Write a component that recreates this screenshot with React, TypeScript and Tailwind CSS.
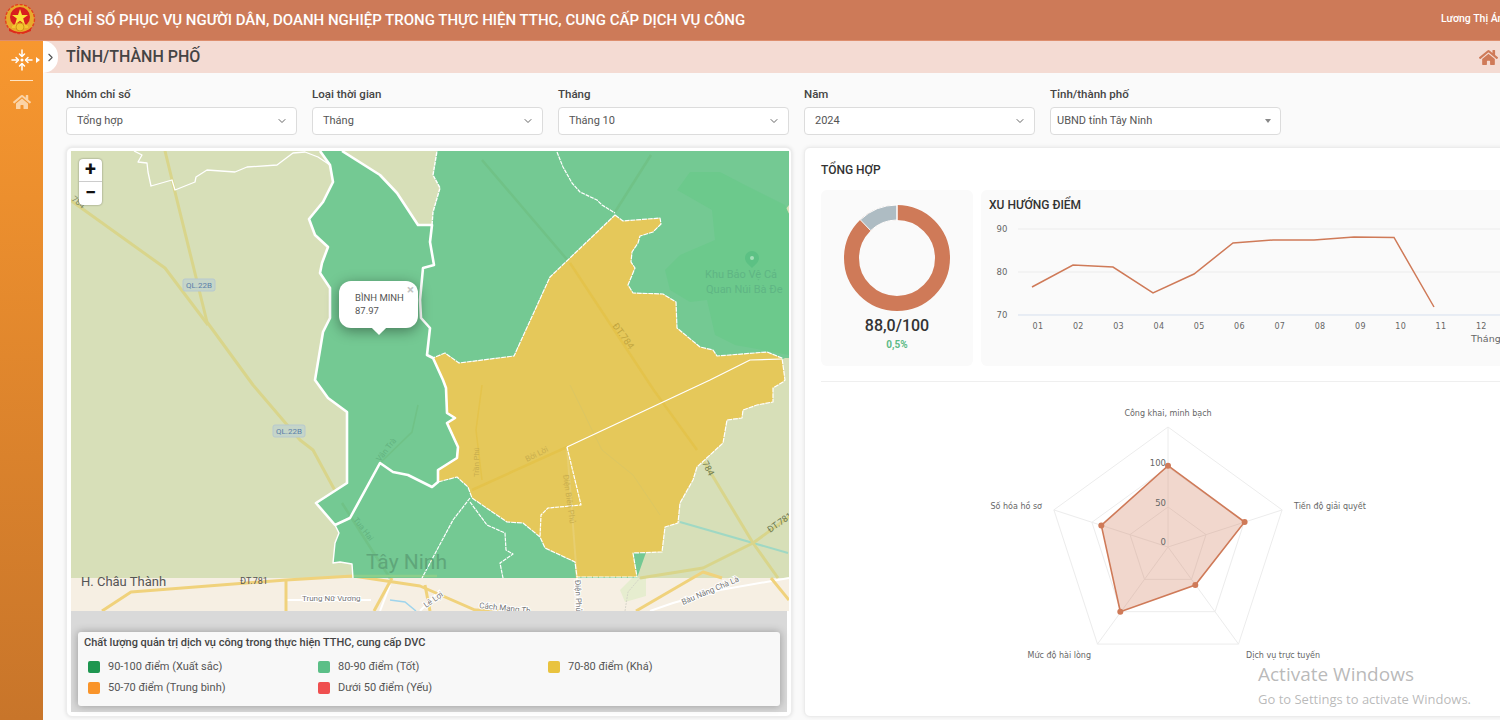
import React from "react";
import { ChevronDown, ChevronRight } from "lucide-react";
import { FaHome } from "react-icons/fa";

const ORANGE = "#cf7a58";

function Emblem() {
  return (
    <svg width="32" height="32" viewBox="0 0 32 32" className="shrink-0">
      <circle cx="16" cy="15" r="14.5" fill="#e9a92c" />
      <circle cx="16" cy="15" r="14.5" fill="none" stroke="#e2401f" strokeWidth="1.4" strokeDasharray="3 1.5" />
      <circle cx="16" cy="13" r="10" fill="#d81e1e" />
      <polygon points="16,5 18,11 24,11 19.2,14.6 21,20.4 16,16.8 11,20.4 12.8,14.6 8,11 14,11" fill="#fbe23a" />
      <path d="M8 22 Q16 15 24 22 L24 24 L8 24 Z" fill="#f4c430" />
      <circle cx="16" cy="23" r="4" fill="#f4c430" stroke="#c98a12" strokeWidth="0.8" />
      <path d="M5 24 Q16 32 27 24 L27 27 Q16 32 5 27 Z" fill="#de2b1c" />
    </svg>
  );
}

function MoveInIcon() {
  return (
    <svg width="22" height="22" viewBox="0 0 22 22" fill="none" stroke="#fff" strokeWidth="1.5" strokeLinecap="round" strokeLinejoin="round">
      <path d="M11 1v6M11 15v6M1 11h6M15 11h6" />
      <path d="M8.5 5 11 7.5 13.5 5M8.5 17 11 14.5 13.5 17M5 8.5 7.5 11 5 13.5M17 8.5 14.5 11 17 13.5" />
      <circle cx="11" cy="11" r="0.8" fill="#fff" />
    </svg>
  );
}

function Field({ label, value, caret, wide }: { label: string; value: string; caret?: boolean; wide?: boolean }) {
  return (
    <div className="w-[231px] shrink-0">
      <div className="mb-[5px] h-4 text-[11.5px] font-medium leading-4 text-[#444]">{label}</div>
      <div className={`flex h-[28px] items-center justify-between rounded border border-[#dcdcdc] bg-white pr-2 text-[11px] text-[#555] ${wide ? "pl-[6px]" : "pl-[10px]"}`}>
        <span>{value}</span>
        {caret ? (
          <span className="mr-[1px] h-0 w-0 border-x-[3px] border-t-[4px] border-x-transparent border-t-[#888]" />
        ) : (
          <ChevronDown size={12} color="#666" />
        )}
      </div>
    </div>
  );
}

const GREEN = "320,151 330,165 333,182 323,202 309,219 315,235 328,247 322,263 320,273 330,288 330,318 323,332 317,368 315,380 328,398 347,412 347,483 316,503 335,525 339,533 335,543 333,563 340,562 352,564 353,578 637,578 700,400 785,358 789,358 789,214 785,210 789,205 789,151 437,151 433,175 440,188 433,212 432,225 418,225 397,193 380,175 342,151";
const YELLOW = "615,215 623,221 660,218 661,224 653,232 640,236 638,243 632,252 631,262 635,268 628,285 633,293 663,294 676,302 677,328 700,347 713,350 717,356 767,352 782,358 785,380 783,382 773,388 773,402 757,405 743,410 742,418 727,420 723,443 697,467 693,480 680,503 678,523 665,527 662,552 633,553 637,577 577,577 575,562 545,548 540,537 523,523 507,522 472,498 468,487 457,477 438,482 438,470 457,458 458,447 447,423 455,418 447,413 446,388 443,380 433,358 445,353 459,363 514,356 550,277";

function MapDrawing() {
  const label = { fontFamily: "Roboto, sans-serif" };
  return (
    <svg width="718" height="460" viewBox="71 151 718 460" className="block" style={label}>
      <rect x="71" y="151" width="718" height="460" fill="#f6efe3" />
      <rect x="71" y="151" width="718" height="427" fill="#d7dfb8" />
      <polygon points="620,590 632,578 646,578 646,596 625,602" fill="#e6edcf" />

      {/* roads on the plain */}
      <g fill="none" stroke="#d9d58b" strokeWidth="3" strokeLinejoin="round">
        <polyline points="165,151 175,192 207,322 253,385 300,440 313,450 333,487 342,503" />
        <polyline points="70,200 165,268 208,325" />
        <polyline points="680,522 788,553" stroke="#9fd8c4" strokeWidth="2" />
        <polyline points="697,450 753,543 778,578" />
        <polyline points="640,578 703,568 753,543 789,517" />
      </g>
      {/* roads below the overlay */}
      <g fill="none" stroke="#fff" strokeWidth="2">
        <polyline points="286,600 371,600" />
        <polyline points="390,585 380,611" />
        <polyline points="650,611 673,603 720,590 789,578" />
        <polyline points="577,578 578,611" />
        <polyline points="440,590 420,611" />
      </g>
      <g fill="none" stroke="#f0d27c" strokeWidth="3" strokeLinejoin="round">
        <polyline points="102,611 131,592 286,580 353,576 420,586 475,610 520,611" />
        <polyline points="286,580 286,611" />
        <polyline points="392,578 374,611" />
        <polyline points="425,585 430,611" />
        <polyline points="636,611 703,572 722,578" />
        <polyline points="771,578 789,600" />
      </g>
      <polyline points="390,600 405,602 416,611" fill="none" stroke="#9fd4ec" strokeWidth="1.5" />
      <polyline points="625,611 628,592 640,578" fill="none" stroke="#cfcfc4" strokeWidth="0.8" strokeDasharray="2 1" />

      <polygon points={GREEN} fill="#74c993" />
      <polygon points="677,190 690,172 720,172 745,185 785,205 789,214 789,355 735,345 715,335 707,300 690,302 670,290 665,270 680,255 715,240 712,210" fill="#6cc98c" />
      {/* faint roads under the green tint */}
      <g fill="none" stroke="#70c287" strokeWidth="2.5">
        <polyline points="482,160 570,263" />
        <polyline points="651,155 615,212" />
        <polyline points="380,463 412,432 418,405" strokeWidth="1.5" />
        <polyline points="342,503 375,555 390,578" />
        <polyline points="353,576 437,576" stroke="#8ccf8b" />
      </g>
      <polygon points={YELLOW} fill="#e5c85a" />
      <g fill="none" stroke="#e4c34b" strokeWidth="2.5">
        <polyline points="570,263 653,389 697,450" />
        <polyline points="472,490 567,447" />
        <polyline points="482,385 476,430 482,480" strokeWidth="1.5" />
        <polyline points="567,447 577,578" stroke="#e7ce70" strokeWidth="2" />
      </g>
      <polyline points="570,385 602,450 633,475 660,515" fill="none" stroke="#dcc662" strokeWidth="1" />

      {/* boundaries */}
      <g fill="none" stroke="#fff" strokeLinejoin="round">
        <polygon points={YELLOW} strokeWidth="1.2" strokeDasharray="5 0.8" />
        <polyline strokeWidth="2.6" points="320,151 330,165 333,182 323,202 309,219 315,235 328,247 322,263 320,273 330,288 330,318 323,332 317,368 315,380 328,398 347,412 347,483 316,503 335,525 350,518 380,463 393,472 408,475 432,487 438,482 438,470 457,458 458,447 447,423 455,418 447,413 446,388 443,380 433,358 427,355 430,328 421,318 420,300 423,268 434,265 430,242 432,225 418,225 397,193 380,175 342,151" />
        <polyline strokeWidth="1.4" points="335,525 339,533 335,543 333,563 340,562 352,564 353,578" />
        <polyline strokeWidth="1.4" strokeDasharray="4 0.8" points="432,225 433,212 440,188 433,175 437,151" />
        <polyline strokeWidth="1.3" points="134,151 142,155 138,162 147,163 148,172 151,186 172,180 175,190 195,182 196,177 207,170 235,172 247,167 277,165 293,153 305,152 318,157 330,165" />
        <polyline strokeWidth="1.2" strokeDasharray="4 0.8" points="557,152 563,167 572,183 580,192 597,200 602,205 615,213" />
        <polyline strokeWidth="1.2" points="567,447 710,380 750,360 782,359" />
        <polyline strokeWidth="1.2" strokeDasharray="4 0.8" points="567,447 581,505 548,508 541,515 540,537" />
        <polyline strokeWidth="1.2" strokeDasharray="4 0.8" points="470,498 453,520 422,578" />
        <polyline strokeWidth="1.2" strokeDasharray="4 0.8" points="470,502 487,525 505,533 506,550 513,554 500,563 503,578" />
      </g>

      {/* labels */}
      <g fontSize="8.5" fill="#7f8a62">
        <text transform="translate(71,200) rotate(38)">784</text>
      </g>
      <g fontSize="8" fill="#c9ae4e">
        <text transform="translate(479,477) rotate(-90)" fontSize="7.5">Trần Phú</text>
        <text x="527" y="462" transform="rotate(-27 527 462)">Bời Lời</text>
        <text transform="translate(563,475) rotate(82)">Điện Biên Phủ</text>
      </g>
      <g fontSize="8" fill="#63b380">
        <text transform="translate(380,462) rotate(-52)">Vân Trà</text>
        <text transform="translate(353,520) rotate(52)">Tua Hai</text>
      </g>
      <text transform="translate(612,326) rotate(54)" fontSize="9.5" fill="#c2a53e">ĐT.784</text>
      <text transform="translate(702,463) rotate(62)" fontSize="9" fill="#6d7a52">784</text>
      <text transform="translate(770,533) rotate(-35)" fontSize="9" fill="#6d7a52">ĐT.781</text>
      <text x="366" y="569" fontSize="21" fill="#5fa67a">Tây Ninh</text>
      <text x="81" y="586" fontSize="13" fill="#555">H. Châu Thành</text>
      <text x="240" y="584" fontSize="9" fill="#555">ĐT.781</text>
      <text x="302" y="601" fontSize="8" fill="#777" stroke="#fff" strokeWidth="2" paintOrder="stroke">Trung Nữ Vương</text>
      <text transform="translate(426,608) rotate(-35)" fontSize="8" fill="#777" stroke="#fff" strokeWidth="2" paintOrder="stroke">Lê Lợi</text>
      <text transform="translate(479,608) rotate(6)" fontSize="8" fill="#777" stroke="#fff" strokeWidth="2" paintOrder="stroke">Cách Mạng Th</text>
      <text transform="translate(575,580) rotate(88)" fontSize="8" fill="#777" stroke="#fff" strokeWidth="2" paintOrder="stroke">Điện Phủ</text>
      <text transform="translate(683,605) rotate(-23)" fontSize="8" fill="#777" stroke="#fff" strokeWidth="2" paintOrder="stroke">Bàu Năng Chà Là</text>
      <text x="705" y="278" fontSize="11" fill="#5fb584">Khu Bảo Vệ Cả</text>
      <text x="706" y="293" fontSize="11" fill="#5fb584">Quan Núi Bà Đe</text>
      <path d="M752 251a7 7 0 0 1 7 7c0 4-4 7-7 10-3-3-7-6-7-10a7 7 0 0 1 7-7Z" fill="#5cc184" />
      <circle cx="752" cy="258" r="2" fill="#a5dfb9" />

      {[[199, 285], [289, 431]].map(([x, y]) => (
        <g key={x}>
          <rect x={x - 16} y={y - 6} width="32" height="12" rx="2" fill="#c5d5c8" stroke="#b7c9d0" />
          <text x={x} y={y + 3} textAnchor="middle" fontSize="8" fill="#5b7fa8">QL.22B</text>
        </g>
      ))}
    </svg>
  );
}

function LegendItem({ color, text }: { color: string; text: string }) {
  return (
    <div className="flex items-center gap-2">
      <span className="h-3 w-3 rounded-[2px]" style={{ background: color }} />
      <span>{text}</span>
    </div>
  );
}

function MapCard() {
  return (
    <div className="relative h-[570px] w-[726px] shrink-0 rounded-md border border-[#ececec] bg-white px-1 pb-1 pt-[3px] shadow-[0_0_4px_rgba(0,0,0,0.12)]">
      <div className="relative">
        <MapDrawing />
        <div className="absolute left-2 top-2 h-[46px] w-[23px] rounded-sm bg-white text-center text-[#111] shadow-[0_0_2px_rgba(0,0,0,0.45)]">
          <div className="h-[23px] border-b border-[#ccc] text-[20px] font-bold leading-[21px]">+</div>
          <div className="h-[23px] text-[20px] font-bold leading-[20px]">−</div>
        </div>
        <div className="absolute left-[268px] top-[130px] h-[47px] w-[79px] rounded-xl bg-white pl-4 pt-[10px] text-[9.5px] leading-[13px] text-[#555] shadow-[0_3px_14px_rgba(0,0,0,0.4)]">
          <div>BÌNH MINH</div>
          <div>87.97</div>
          <span className="absolute right-[4px] top-[2px] text-[13px] font-bold leading-[13px] text-[#c3c3c3]">×</span>
          <span className="absolute bottom-[-5px] left-[35px] h-[10px] w-[10px] rotate-45 bg-white" />
        </div>
      </div>
      <div className="bg-[#d9d9d9] px-[7px] pb-[6px] pt-[21px]">
        <div className="h-[74px] rounded-[3px] bg-[#f8f8f8] px-[6px] pt-[4px] text-[11px] text-[#555] shadow-[0_0_8px_rgba(0,0,0,0.3)]">
          <div className="mb-[10px] text-[11px] font-medium leading-[14px] text-[#444]">Chất lượng quản trị dịch vụ công trong thực hiện TTHC, cung cấp DVC</div>
          <div className="grid grid-cols-[230px_230px_230px] gap-y-[7px] pl-1 leading-[14px]">
            <LegendItem color="#1e9650" text="90-100 điểm (Xuất sắc)" />
            <LegendItem color="#5bbf87" text="80-90 điểm (Tốt)" />
            <LegendItem color="#e9c33f" text="70-80 điểm (Khá)" />
            <LegendItem color="#f9942a" text="50-70 điểm (Trung bình)" />
            <LegendItem color="#ef4f4f" text="Dưới 50 điểm (Yếu)" />
          </div>
        </div>
      </div>
    </div>
  );
}

function Donut() {
  return (
    <svg width="110" height="110" viewBox="-55 -55 110 110">
      <circle r="45.5" fill="none" stroke={ORANGE} strokeWidth="15" />
      <path d="M0 -53 A53 53 0 0 0 -36.7 -38.2 L-26.3 -27.4 A38 38 0 0 1 0 -38 Z" fill="#aebcc3" stroke="#fff" strokeWidth="1" />
      <line x1="0" y1="-54" x2="0" y2="-37" stroke="#fff" strokeWidth="1" />
    </svg>
  );
}

const chartFont = { fontFamily: "'DejaVu Sans', sans-serif" };

function LineChart() {
  const ticks = ["01", "02", "03", "04", "05", "06", "07", "08", "09", "10", "11", "12"];
  const pts = "1031,287 1072,265 1112,267 1152,293 1193,274 1232,243 1272,240 1313,240 1353,237 1393,237.5 1433,307";
  return (
    <svg width="520" height="176" viewBox="980 190 520 176" className="block" style={chartFont}>
      {[229, 272].map((y) => (
        <line key={y} x1="1017" x2="1500" y1={y} y2={y} stroke="#ececec" />
      ))}
      <line x1="1017" x2="1500" y1="315" y2="315" stroke="#d5dfee" />
      {[[90, 232], [80, 275], [70, 318]].map(([v, y]) => (
        <text key={v} x="1001" y={y} fontSize="8.5" textAnchor="middle" fill="#666">{v}</text>
      ))}
      {ticks.map((t, i) => (
        <text key={t} x={1037 + i * 40.3} y="329" fontSize="8" textAnchor="middle" letterSpacing="0.3" fill="#666">{t}</text>
      ))}
      <text x="1470" y="342" fontSize="9.5" fill="#666">Tháng</text>
      <polyline points={pts} fill="none" stroke={ORANGE} strokeWidth="1.5" />
    </svg>
  );
}

function Radar() {
  const ang = [-90, -18, 54, 126, 198].map((d) => (d * Math.PI) / 180);
  const ring = (r: number) => ang.map((a) => `${(Math.cos(a) * r).toFixed(1)},${(Math.sin(a) * r).toFixed(1)}`).join(" ");
  const data = [[0, -81.3], [76.6, -25], [27.3, 38], [-47.7, 64.7], [-66.7, -21.6]];
  const dp = data.map((p) => p.join(",")).join(" ");
  return (
    <svg width="420" height="270" viewBox="-210 -145 420 270" className="block" style={chartFont}>
      {[40, 80, 120].map((r) => (
        <polygon key={r} points={ring(r)} fill="none" stroke="#ececec" strokeWidth="1" />
      ))}
      {ang.map((a, i) => (
        <line key={i} x1="0" y1="0" x2={Math.cos(a) * 120} y2={Math.sin(a) * 120} stroke="#ececec" />
      ))}
      <polygon points={dp} fill={ORANGE} fillOpacity="0.3" stroke={ORANGE} strokeWidth="1.6" />
      {data.map((p, i) => (
        <circle key={i} cx={p[0]} cy={p[1]} r="3" fill={ORANGE} />
      ))}
      <g fontSize="8" fill="#666">
        <text x="-2" y="-81" textAnchor="end" fontSize="8.5">100</text>
        <text x="-2" y="-41" textAnchor="end" fontSize="8.5">50</text>
        <text x="-2" y="-2" textAnchor="end" fontSize="8.5">0</text>
        <text x="0" y="-131" textAnchor="middle">Công khai, minh bạch</text>
        <text x="126" y="-38">Tiến độ giải quyết</text>
        <text x="78" y="111">Dịch vụ trực tuyến</text>
        <text x="-77" y="111" textAnchor="end">Mức độ hài lòng</text>
        <text x="-126" y="-38" textAnchor="end">Số hóa hồ sơ</text>
      </g>
    </svg>
  );
}

function SummaryCard() {
  return (
    <div className="h-[570px] w-[800px] shrink-0 overflow-hidden rounded-md border border-[#ececec] bg-white pl-4 shadow-[0_0_4px_rgba(0,0,0,0.08)]">
      <div className="flex h-[42px] items-center pt-[1px] text-[12px] font-medium text-[#333]">TỔNG HỢP</div>
      <div className="flex gap-2">
        <div className="flex h-[176px] w-[152px] shrink-0 flex-col items-center rounded-md bg-[#fafafa] pt-[13px]">
          <Donut />
          <div className="mt-[3px] text-[16px] font-medium leading-5 text-[#333]">88,0/100</div>
          <div className="mt-[3px] text-[10px] font-bold leading-3 text-[#5dbb87]">0,5%</div>
        </div>
        <div className="relative h-[176px] w-[600px] shrink-0 rounded-md bg-[#fafafa]">
          <LineChart />
          <div className="absolute left-2 top-[7px] text-[12px] font-medium leading-4 text-[#333]">XU HƯỚNG ĐIỂM</div>
        </div>
      </div>
      <div className="mt-[15px] h-px bg-[#efefef]" />
      <div className="ml-[137px] mt-[20px] w-[420px]">
        <Radar />
      </div>
    </div>
  );
}

export default function App() {
  return (
    <div className="relative flex h-[720px] w-[1500px] flex-col overflow-hidden bg-[#fafafa] font-['Roboto',sans-serif]">
      <header className="flex h-[41px] shrink-0 items-center border-b border-[#dd8e6e] bg-[#cd7a58] pl-1">
        <Emblem />
        <h1 className="ml-2 text-[15px] font-medium text-white">BỘ CHỈ SỐ PHỤC VỤ NGƯỜI DÂN, DOANH NGHIỆP TRONG THỰC HIỆN TTHC, CUNG CẤP DỊCH VỤ CÔNG</h1>
        <span className="ml-auto w-[59px] overflow-hidden whitespace-nowrap pb-[3px] text-[10.5px] font-medium text-white">Lương Thị Ánh</span>
      </header>
      <div className="flex min-h-0 flex-1">
        <aside className="flex w-[43px] shrink-0 flex-col items-center bg-gradient-to-b from-[#f7972f] to-[#c8752a] pt-2">
          <div className="relative flex h-[22px] w-full justify-center">
            <MoveInIcon />
            <span className="absolute left-[36px] top-[8px] h-0 w-0 border-y-[3px] border-l-[4px] border-y-transparent border-l-white" />
          </div>
          <div className="mt-[9px] h-px w-[23px] bg-[#fde3c4]" />
          <FaHome size={18} color="#fbd3a5" className="mt-3" />
        </aside>
        <main className="min-w-0 flex-1">
          <div className="flex h-8 items-center bg-[#f4dbd3] pr-[2px]">
            <div className="flex h-full w-[15px] shrink-0 items-center justify-center rounded-r-[16px] bg-white">
              <ChevronRight size={13} color="#555" />
            </div>
            <div className="ml-2 text-[16px] font-medium text-[#444]">TỈNH/THÀNH PHỐ</div>
            <FaHome size={19} color={ORANGE} className="ml-auto" />
          </div>
          <div className="pl-[23px] pt-[13px]">
            <div className="flex gap-[15px]">
              <Field label="Nhóm chỉ số" value="Tổng hợp" />
              <Field label="Loại thời gian" value="Tháng" />
              <Field label="Tháng" value="Tháng 10" />
              <Field label="Năm" value="2024" />
              <Field label="Tỉnh/thành phố" value="UBND tỉnh Tây Ninh" caret wide />
            </div>
            <div className="mt-3 flex gap-3">
              <MapCard />
              <SummaryCard />
            </div>
          </div>
        </main>
      </div>
      <div className="pointer-events-none absolute left-[1258px] top-[661px] font-['Open_Sans',sans-serif] text-[#9b9b9b]/70">
        <div className="text-[19px] leading-[26px]">Activate Windows</div>
        <div className="mt-[3px] text-[13px] leading-[18px]">Go to Settings to activate Windows.</div>
      </div>
    </div>
  );
}
